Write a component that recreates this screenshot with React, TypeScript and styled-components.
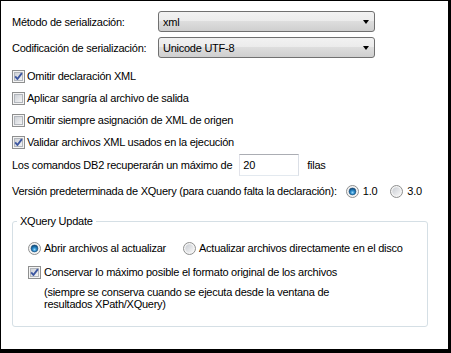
import React from 'react';
import styled, { createGlobalStyle } from 'styled-components';

const GlobalStyle = createGlobalStyle`
  html, body {
    margin: 0;
    padding: 0;
    background: #fff;
  }
  body {
    font-family: "Liberation Sans", Arial, sans-serif;
    font-size: 11px;
    letter-spacing: -0.25px;
    color: #000;
    white-space: nowrap;
  }
`;

const Frame = styled.div`
  box-sizing: border-box;
  width: 451px;
  height: 353px;
  border: 1px solid #000;
  border-right-width: 3px;
  border-bottom-width: 4px;
  padding: 10px 0 0 11px;
  display: flex;
  flex-direction: column;
`;

const FieldRow = styled.div<{ $gap?: number }>`
  display: flex;
  align-items: center;
  height: 21px;
  margin-top: ${(p) => p.$gap ?? 0}px;
`;

const FieldLabel = styled.span`
  width: 146px;
  flex: none;
`;

const Combo = styled.div`
  box-sizing: border-box;
  width: 217px;
  height: 21px;
  display: flex;
  align-items: center;
  padding-left: 4px;
  border: 1px solid #707070;
  border-radius: 3px;
  background: linear-gradient(#f2f2f2 0%, #ebebeb 50%, #dddddd 50%, #cfcfcf 100%);
`;

const ComboArrow = styled.span`
  margin-left: auto;
  margin-right: 5px;
  width: 0;
  height: 0;
  border-top: 4px solid #000;
  border-left: 3.5px solid transparent;
  border-right: 3.5px solid transparent;
`;

const CheckList = styled.div`
  display: flex;
  flex-direction: column;
  margin-top: 7px;
`;

const OptionRow = styled.div<{ $gap?: number }>`
  display: flex;
  align-items: center;
  height: 22px;
  margin-top: ${(p) => p.$gap ?? 0}px;
`;

const Choice = styled.label<{ $gap?: number; $lead?: number }>`
  display: flex;
  align-items: center;
  gap: ${(p) => p.$gap ?? 2}px;
  margin-left: ${(p) => p.$lead ?? 0}px;
`;

const NumberBox = styled.input`
  box-sizing: border-box;
  width: 60px;
  height: 22px;
  margin: 0 8px 0 7px;
  padding: 0 3px;
  border: 1px solid;
  border-color: #abadb3 #dbdfe6 #e3e9ef #e2e3ea;
  font: inherit;
  letter-spacing: inherit;
  color: #000;
  outline: none;
`;

const Group = styled.fieldset`
  box-sizing: border-box;
  width: 416px;
  margin: 12px 0 0 0;
  padding: 0;
  min-width: 0;
  border: 1px solid #d5dfe5;
  border-radius: 3px;
`;

const GroupTitle = styled.legend`
  margin-left: 4px;
  padding: 0 3px;
  line-height: 14px;
`;

const GroupBody = styled.div`
  display: flex;
  flex-direction: column;
  padding: 9px 16px 16px 15px;
`;

const Note = styled.p`
  margin: 3px 0 0 16px;
  line-height: 12px;
`;

const CheckBox = ({ checked }: { checked?: boolean }) => (
  <svg width="13" height="13" viewBox="0 0 13 13" style={{ flex: 'none' }}>
    <defs>
      <linearGradient id="cbInner" x1="0" y1="0" x2="1" y2="1">
        <stop offset="0" stopColor="#cbcfd5" />
        <stop offset="1" stopColor="#f6f6f6" />
      </linearGradient>
    </defs>
    <rect x="0.5" y="0.5" width="12" height="12" fill="#f4f4f4" stroke="#8e8f8f" />
    <rect x="2.5" y="2.5" width="8" height="8" fill="url(#cbInner)" stroke="#b2b6bc" />
    {checked && (
      <path d="M3.2 6.4 L5.4 9 L9.9 3.2" fill="none" stroke="#3c56a0" strokeWidth="1.9" strokeLinejoin="round" />
    )}
  </svg>
);

const Radio = ({ checked }: { checked?: boolean }) => (
  <svg width="13" height="13" viewBox="0 0 13 13" style={{ flex: 'none' }}>
    <defs>
      <linearGradient id="rdInner" x1="0" y1="0" x2="1" y2="1">
        <stop offset="0" stopColor="#c9cdd3" />
        <stop offset="1" stopColor="#f7f7f7" />
      </linearGradient>
      <radialGradient id="rdDot" cx="50%" cy="65%" r="60%">
        <stop offset="0" stopColor="#9ad9fb" />
        <stop offset="0.45" stopColor="#2b8ccc" />
        <stop offset="1" stopColor="#0d4a7c" />
      </radialGradient>
    </defs>
    <circle cx="6.5" cy="6.5" r="6" fill="#f4f4f4" stroke="#8e8f8f" />
    <circle cx="6.5" cy="6.5" r="4.2" fill="url(#rdInner)" />
    {checked && <circle cx="6.5" cy="6.5" r="3.4" fill="url(#rdDot)" stroke="#1a4f7a" strokeWidth="0.6" />}
  </svg>
);

export default function App() {
  return (
    <>
      <GlobalStyle />
      <Frame>
        <FieldRow>
          <FieldLabel>Método de serialización:</FieldLabel>
          <Combo>
            xml
            <ComboArrow />
          </Combo>
        </FieldRow>
        <FieldRow $gap={5}>
          <FieldLabel>Codificación de serialización:</FieldLabel>
          <Combo>
            Unicode UTF-8
            <ComboArrow />
          </Combo>
        </FieldRow>

        <CheckList>
          <OptionRow>
            <Choice>
              <CheckBox checked />
              Omitir declaración XML
            </Choice>
          </OptionRow>
          <OptionRow>
            <Choice>
              <CheckBox />
              Aplicar sangría al archivo de salida
            </Choice>
          </OptionRow>
          <OptionRow>
            <Choice>
              <CheckBox />
              Omitir siempre asignación de XML de origen
            </Choice>
          </OptionRow>
          <OptionRow>
            <Choice>
              <CheckBox checked />
              Validar archivos XML usados en la ejecución
            </Choice>
          </OptionRow>
        </CheckList>

        <OptionRow $gap={1}>
          Los comandos DB2 recuperarán un máximo de
          <NumberBox defaultValue="20" readOnly />
          filas
        </OptionRow>

        <OptionRow $gap={4}>
          Versión predeterminada de XQuery (para cuando falta la declaración):
          <Choice $gap={4} $lead={9}>
            <Radio checked />
            1.0
          </Choice>
          <Choice $gap={4} $lead={13}>
            <Radio />
            3.0
          </Choice>
        </OptionRow>

        <Group>
          <GroupTitle>XQuery Update</GroupTitle>
          <GroupBody>
            <OptionRow>
              <Choice $gap={3}>
                <Radio checked />
                Abrir archivos al actualizar
              </Choice>
              <Choice $gap={3} $lead={17}>
                <Radio />
                Actualizar archivos directamente en el disco
              </Choice>
            </OptionRow>
            <OptionRow $gap={2}>
              <Choice $gap={3}>
                <CheckBox checked />
                Conservar lo máximo posible el formato original de los archivos
              </Choice>
            </OptionRow>
            <Note>
              (siempre se conserva cuando se ejecuta desde la ventana de
              <br />
              resultados XPath/XQuery)
            </Note>
          </GroupBody>
        </Group>
      </Frame>
    </>
  );
}
